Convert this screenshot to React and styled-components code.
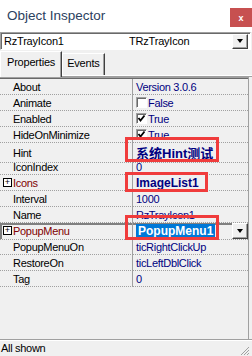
import React from 'react';
import styled, { createGlobalStyle } from 'styled-components';

const GlobalStyle = createGlobalStyle`
  html, body {
    margin: 0;
    padding: 0;
    background: #f0f0f0;
  }
  body {
    width: 252px;
    height: 356px;
    overflow: hidden;
    font-family: "Liberation Sans", Arial, sans-serif;
  }
`;

const Window = styled.div`
  width: 252px;
  height: 356px;
  display: flex;
  flex-direction: column;
  background: #f0f0f0;
`;

const TitleBar = styled.div`
  height: 32px;
  flex: none;
  background: #fff;
  display: flex;
  justify-content: space-between;
  align-items: flex-start;
  padding-left: 7px;
`;

const Title = styled.div`
  margin-top: 8px;
  font-size: 13.5px;
  color: #2b4160;
`;

const CloseButton = styled.div`
  margin-top: 8px;
  width: 22px;
  height: 19px;
  background: #c75050;
  color: #fff;
  font-size: 9px;
  font-weight: bold;
  display: flex;
  align-items: center;
  justify-content: center;
`;

const Combo = styled.div`
  height: 18px;
  width: 251px;
  box-sizing: border-box;
  flex: none;
  display: flex;
  align-items: center;
  background: #fff;
  border: 1px solid;
  border-color: #a0a0a0 #fff #fff #a0a0a0;
  box-shadow: inset 1px 1px 0 #696969;
  font-size: 11px;
  letter-spacing: -0.2px;
  color: #000;
`;

const ComboText = styled.span`
  width: ${p => p.$width}px;
  padding-left: 3px;
  box-sizing: border-box;
`;

const DropButton = styled.div`
  margin-left: auto;
  margin-right: 2px;
  width: 16px;
  height: 15px;
  box-sizing: border-box;
  background: #f0f0f0;
  border: 1px solid;
  border-color: #fff #404040 #404040 #fff;
  box-shadow: inset -1px -1px 0 #a0a0a0;
  display: flex;
  align-items: center;
  justify-content: center;
`;

const Arrow = styled.div`
  width: 0;
  height: 0;
  border-left: 3.5px solid transparent;
  border-right: 3.5px solid transparent;
  border-top: 4px solid #000;
`;

const TabStrip = styled.div`
  height: 27px;
  flex: none;
  display: flex;
  align-items: flex-end;
  box-shadow: inset 0 -1px 0 #a0a0a0, inset 0 -2px 0 #fff;
`;

const Tab = styled.div`
  height: ${p => (p.$active ? 26 : 22)}px;
  margin-bottom: ${p => (p.$active ? 0 : 2)}px;
  box-sizing: border-box;
  padding: ${p => (p.$active ? '4px 6px 0 6px' : '3px 4px 0 4px')};
  font-size: 11px;
  letter-spacing: -0.2px;
  color: #000;
  background: #f0f0f0;
  border-left: 1px solid #fff;
  border-top: 1px solid #fff;
  border-right: 1px solid #404040;
  box-shadow: inset -1px 0 0 #a0a0a0;
`;

const Grid = styled.div`
  flex: 1;
  width: 249px;
  box-sizing: border-box;
  border-top: 1px solid #a0a0a0;
  border-right: 1px solid #a0a0a0;
  box-shadow: inset 0 1px 0 #696969;
  padding-top: 1px;
`;

const Row = styled.div`
  position: relative;
  display: grid;
  grid-template-columns: 133px 1fr;
  height: 16px;
  box-shadow: ${p => (p.$selected ? 'inset 2px 2px 0 #808080' : 'none')};
`;

const NameCell = styled.div`
  display: flex;
  align-items: center;
  box-sizing: border-box;
  padding-left: 13px;
  border-right: 1px solid #a0a0a0;
  border-bottom: 1px dotted #a0a0a0;
  font-size: 11px;
  letter-spacing: -0.3px;
  color: ${p => (p.$group ? '#800000' : '#000')};
  position: relative;
  white-space: nowrap;
`;

const Expander = styled.div`
  position: absolute;
  left: 3px;
  top: 3px;
  width: 9px;
  height: 9px;
  box-sizing: border-box;
  border: 1px solid #000;
  background: #fff;
  display: flex;
  align-items: center;
  justify-content: center;
  font-size: 9px;
  line-height: 7px;
  letter-spacing: 0;
  color: #000;
`;

const ValueCell = styled.div`
  display: flex;
  align-items: center;
  box-sizing: border-box;
  padding-left: 3px;
  border-bottom: 1px dotted #a0a0a0;
  font-size: ${p => (p.$big ? 13 : p.$bold ? 12 : 11)}px;
  font-weight: ${p => (p.$bold ? 'bold' : 'normal')};
  letter-spacing: ${p => (p.$bold ? 0 : -0.3)}px;
  color: #000080;
  white-space: nowrap;
  font-family: "Liberation Sans", "Noto Sans CJK SC", sans-serif;
`;

const CheckBox = styled.div`
  width: 11px;
  height: 11px;
  box-sizing: border-box;
  margin-right: 1px;
  background: #fff;
  border: 1px solid;
  border-color: #a0a0a0 #fff #fff #a0a0a0;
  box-shadow: inset 1px 1px 0 #696969;
  display: flex;
  align-items: center;
  justify-content: center;
`;

const Highlight = styled.span`
  background: #0078d7;
  color: #fff;
  padding: 1px 2px;
  line-height: 13px;
`;

const CellDrop = styled(DropButton)`
  margin-right: 0;
  height: 16px;
`;

const Frame = styled.div`
  position: absolute;
  z-index: 2;
  left: 125px;
  top: ${p => p.$top}px;
  width: ${p => p.$width}px;
  height: ${p => p.$height}px;
  box-sizing: border-box;
  border: 3px solid #f03c3c;
  pointer-events: none;
`;

const StatusBar = styled.div`
  height: 17px;
  flex: none;
  box-sizing: border-box;
  border-top: 1px solid #a0a0a0;
  box-shadow: inset 0 1px 0 #fff;
  display: flex;
  align-items: center;
  padding-left: 1px;
  font-size: 11px;
  letter-spacing: -0.3px;
  color: #000;
  position: relative;
`;

const Grip = styled.svg`
  position: absolute;
  right: 2px;
  bottom: 0;
`;

const rows = [
  { name: 'About', value: 'Version 3.0.6' },
  { name: 'Animate', check: false, value: 'False' },
  { name: 'Enabled', check: true, value: 'True' },
  { name: 'HideOnMinimize', check: true, value: 'True' },
  { name: 'Hint', value: '系统Hint测试', bold: true, big: true, frame: { top: -6, width: 94, height: 25 } },
  { name: 'IconIndex', value: '0' },
  { name: 'Icons', group: true, value: 'ImageList1', bold: true, frame: { top: -3, width: 83, height: 20 } },
  { name: 'Interval', value: '1000' },
  { name: 'Name', value: 'RzTrayIcon1' },
  { name: 'PopupMenu', group: true, selected: true, value: 'PopupMenu1', bold: true, frame: { top: -8, width: 94, height: 25 } },
  { name: 'PopupMenuOn', value: 'ticRightClickUp' },
  { name: 'RestoreOn', value: 'ticLeftDblClick' },
  { name: 'Tag', value: '0' },
];

function Check({ on }) {
  return (
    <CheckBox>
      {on && (
        <svg width="9" height="9" viewBox="0 0 9 9">
          <polyline points="1.5,4 3.5,6.5 7.5,1.5" fill="none" stroke="#000" strokeWidth="1.8" />
        </svg>
      )}
    </CheckBox>
  );
}

export default function App() {
  return (
    <>
      <GlobalStyle />
      <Window>
        <TitleBar>
          <Title>Object Inspector</Title>
          <CloseButton>x</CloseButton>
        </TitleBar>
        <Combo>
          <ComboText $width={125}>RzTrayIcon1</ComboText>
          <ComboText $width={100}>TRzTrayIcon</ComboText>
          <DropButton><Arrow /></DropButton>
        </Combo>
        <TabStrip>
          <Tab $active>Properties</Tab>
          <Tab>Events</Tab>
        </TabStrip>
        <Grid>
          {rows.map(r => (
            <Row key={r.name} $selected={r.selected}>
              <NameCell $group={r.group}>
                {r.group && <Expander>+</Expander>}
                {r.name}
              </NameCell>
              <ValueCell $bold={r.bold} $big={r.big}>
                {r.check !== undefined && <Check on={r.check} />}
                {r.selected ? <Highlight>{r.value}</Highlight> : r.value}
                {r.selected && <CellDrop><Arrow /></CellDrop>}
              </ValueCell>
              {r.frame && <Frame $top={r.frame.top} $width={r.frame.width} $height={r.frame.height} />}
            </Row>
          ))}
        </Grid>
        <StatusBar>
          All shown
          <Grip width="11" height="11" viewBox="0 0 11 11">
            <path d="M10 2 L2 10 M10 5 L5 10 M10 8 L8 10" stroke="#a0a0a0" strokeWidth="1" />
          </Grip>
        </StatusBar>
      </Window>
    </>
  );
}
